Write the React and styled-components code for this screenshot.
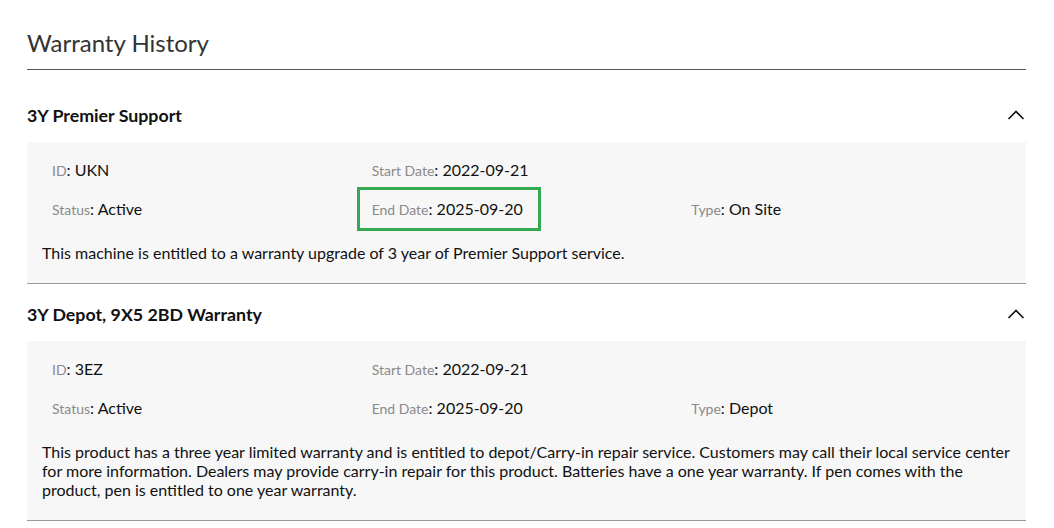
import React from "react";
import styled, { createGlobalStyle } from "styled-components";

const Global = createGlobalStyle`
  html, body { margin: 0; padding: 0; background: #fff; }
  body { font-family: Lato, "Noto Sans", sans-serif; color: #111; }
`;

const Page = styled.div`
  padding: 28px 28px 0 27px;
`;

const Title = styled.h2`
  margin: 0;
  font-size: 24px;
  line-height: 30px;
  font-weight: 400;
  color: #333;
`;

const Rule = styled.hr`
  margin: 11px 0 15px;
  border: 0;
  border-top: 1px solid #555;
`;

const Section = styled.section``;

const Header = styled.div`
  display: flex;
  align-items: center;
  justify-content: space-between;
  padding: 18px 0 15px;
  line-height: 24px;
`;

const HeaderTitle = styled.h3`
  margin: 0;
  font-size: 17.8px;
  font-weight: 700;
  color: #111;
`;

const Chevron = styled.svg`
  width: 18px;
  height: 10px;
  margin-right: 1px;
`;

const Panel = styled.div`
  background: #f7f7f7;
  border-bottom: 1px solid #9a9a9a;
  padding: 18px 15px 21px;
`;

const Grid = styled.div`
  display: grid;
  grid-template-columns: repeat(3, 1fr);
  row-gap: 18px;
  padding-left: 10px;
`;

const Field = styled.div`
  position: relative;
  line-height: 20px;
  font-size: 16px;
  color: #111;
  grid-column: ${(p) => p.$col || "auto"};
`;

const Label = styled.span`
  font-size: 14px;
  color: #8a8a8a;
`;

const Highlight = styled.span`
  position: absolute;
  left: -15px;
  top: -12px;
  width: 184px;
  height: 44px;
  border: 3px solid #35a852;
  box-sizing: border-box;
  pointer-events: none;
`;

const Desc = styled.p`
  margin: 23px 0 0;
  font-size: 16px;
  line-height: 19px;
  color: #111;
`;

const Up = () => (
  <Chevron viewBox="0 0 18 10" fill="none">
    <path d="M1.5 9 L9 1.5 L16.5 9" stroke="#111" strokeWidth="1.6" />
  </Chevron>
);

const F = ({ label, value, col, highlight }) => (
  <Field $col={col}>
    <Label>{label}</Label>: {value}
    {highlight && <Highlight />}
  </Field>
);

const items = [
  {
    title: "3Y Premier Support",
    id: "UKN",
    start: "2022-09-21",
    end: "2025-09-20",
    type: "On Site",
    highlight: true,
    desc: "This machine is entitled to a warranty upgrade of 3 year of Premier Support service.",
  },
  {
    title: "3Y Depot, 9X5 2BD Warranty",
    id: "3EZ",
    start: "2022-09-21",
    end: "2025-09-20",
    type: "Depot",
    desc: "This product has a three year limited warranty and is entitled to depot/Carry-in repair service. Customers may call their local service center for more information. Dealers may provide carry-in repair for this product. Batteries have a one year warranty. If pen comes with the product, pen is entitled to one year warranty.",
  },
];

export default function App() {
  return (
    <>
      <Global />
      <Page>
        <Title>Warranty History</Title>
        <Rule />
        {items.map((it) => (
          <Section key={it.title}>
            <Header>
              <HeaderTitle>{it.title}</HeaderTitle>
              <Up />
            </Header>
            <Panel>
              <Grid>
                <F label="ID" value={it.id} col="1" />
                <F label="Start Date" value={it.start} col="2" />
                <F label="Status" value="Active" col="1" />
                <F label="End Date" value={it.end} col="2" highlight={it.highlight} />
                <F label="Type" value={it.type} col="3" />
              </Grid>
              <Desc>{it.desc}</Desc>
            </Panel>
          </Section>
        ))}
      </Page>
    </>
  );
}
